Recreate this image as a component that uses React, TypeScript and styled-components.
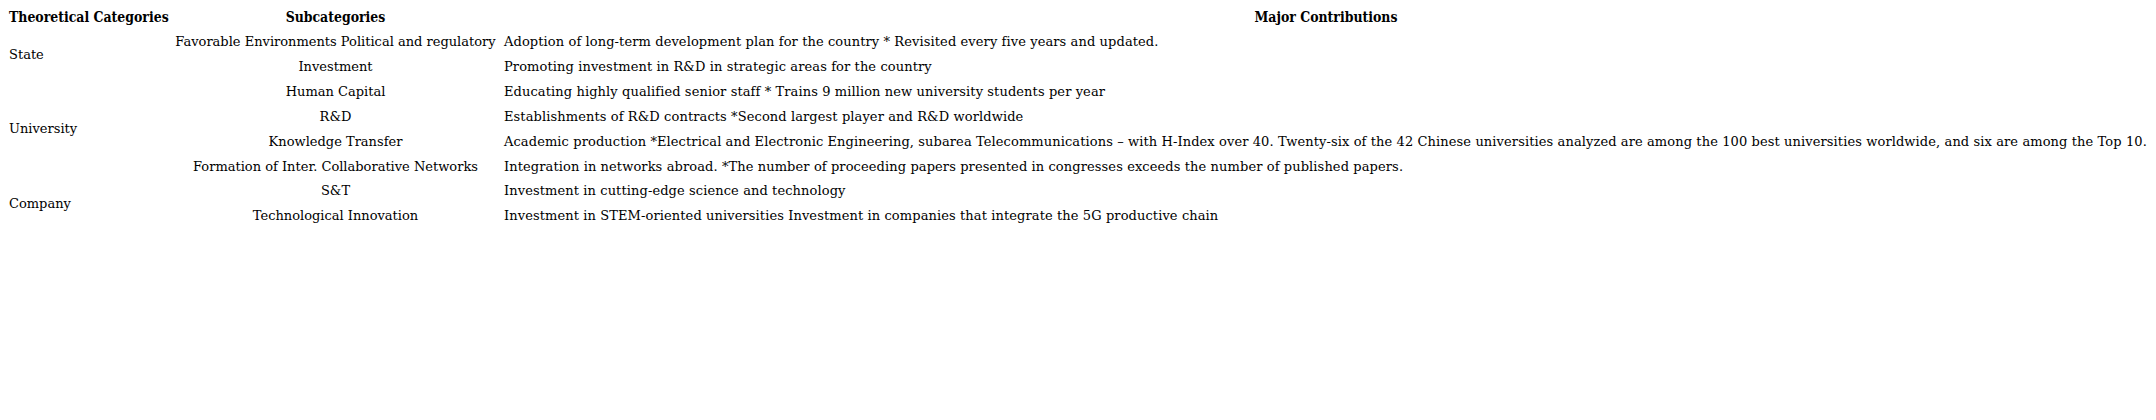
import React from "react";
import styled, { createGlobalStyle } from "styled-components";

const Global = createGlobalStyle`
  html, body { margin: 0; padding: 0; background: #ffffff; }
  body { font-family: "DejaVu Serif", "Liberation Serif", serif; color: #000000; }
`;

const Table = styled.table`
  border-collapse: collapse;
  table-layout: fixed;
  width: 2147px;
  margin: 5px 0 0 5px;
  font-family: "DejaVu Serif", "Liberation Serif", serif;
  font-size: 13px;
  white-space: nowrap;
  color: #000000;
`;

const HeadCell = styled.th<{ $width?: number }>`
  font-family: "DejaVu Serif Condensed", "DejaVu Serif", serif;
  font-weight: bold;
  font-size: 13.9px;
  text-align: center;
  vertical-align: middle;
  line-height: 20px;
  padding: 2.4px 4px 2.4px;
  ${(p) => (p.$width ? `width: ${p.$width}px;` : "")}
`;

const Cell = styled.td<{ $align?: "left" | "center"; $spaced?: boolean }>`
  text-align: ${(p) => p.$align ?? "left"};
  vertical-align: middle;
  line-height: 20px;
  padding: 2.45px 4px;
  overflow: visible;
  letter-spacing: ${(p) => (p.$spaced ? "0.1px" : "0")};
`;

type Row = { sub: string; text: string };
type Group = { category: string; rows: Row[] };

const data: Group[] = [
  {
    category: "State",
    rows: [
      {
        sub: "Favorable Environments Political and regulatory",
        text: "Adoption of long-term development plan for the country * Revisited every five years and updated.",
      },
      {
        sub: "Investment",
        text: "Promoting investment in R&D in strategic areas for the country",
      },
    ],
  },
  {
    category: "University",
    rows: [
      {
        sub: "Human Capital",
        text: "Educating highly qualified senior staff * Trains 9 million new university students per year",
      },
      {
        sub: "R&D",
        text: "Establishments of R&D contracts *Second largest player and R&D worldwide",
      },
      {
        sub: "Knowledge Transfer",
        text: "Academic production *Electrical and Electronic Engineering, subarea Telecommunications – with H-Index over 40. Twenty-six of the 42 Chinese universities analyzed are among the 100 best universities worldwide, and six are among the Top 10.",
      },
      {
        sub: "Formation of Inter. Collaborative Networks",
        text: "Integration in networks abroad. *The number of proceeding papers presented in congresses exceeds the number of published papers.",
      },
    ],
  },
  {
    category: "Company",
    rows: [
      { sub: "S&T", text: "Investment in cutting-edge science and technology" },
      {
        sub: "Technological Innovation",
        text: "Investment in STEM-oriented universities Investment in companies that integrate the 5G productive chain",
      },
    ],
  },
];

export default function App() {
  return (
    <>
      <Global />
      <Table>
        <thead>
          <tr>
            <HeadCell $width={158}>Theoretical Categories</HeadCell>
            <HeadCell $width={321}>Subcategories</HeadCell>
            <HeadCell>Major Contributions</HeadCell>
          </tr>
        </thead>
        <tbody>
          {data.map((g) =>
            g.rows.map((r, i) => (
              <tr key={g.category + r.sub}>
                {i === 0 && <Cell rowSpan={g.rows.length}>{g.category}</Cell>}
                <Cell $align="center">{r.sub}</Cell>
                <Cell $spaced>{r.text}</Cell>
              </tr>
            ))
          )}
        </tbody>
      </Table>
    </>
  );
}
